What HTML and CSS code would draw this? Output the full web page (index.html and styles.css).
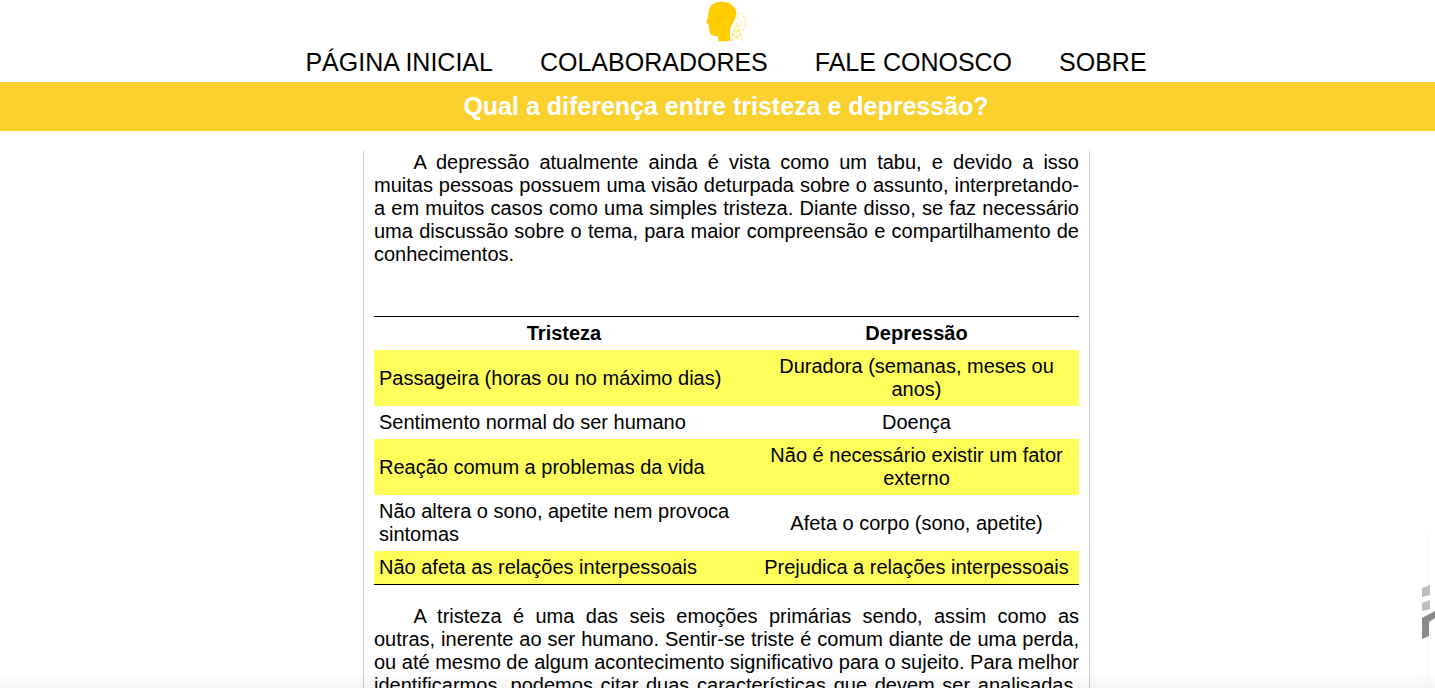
FILE: index.html
```html
<!DOCTYPE html>
<html lang="pt-BR">
<head>
    <meta charset="UTF-8">
    <meta name="viewport" content="width=device-width, initial-scale=1.0">
    <title>Qual a diferença entre tristeza e depressão?</title>
    <link rel="stylesheet" href="styles.css">
</head>
<body>

    <!-- Logo e menu -->
    <header class="top">
        <svg class="logo" viewBox="-1 0 40 44" width="40" height="44" aria-hidden="true">
            <path class="logo-head" d="M2.3 9.3C3 6.5 4.5 4.5 6.3 4C9 2.5 13 1.5 16.3 2C20 2.2 23 3 24.7 5C27.5 7 29 9 29 11.7C29.5 14 29 16 28 18.3C27.5 21 26 23 24.7 25C23.5 27 23 29 23 31.7V40.7C19 41.5 15 41.5 11.3 41.3C11.3 39 11 37.5 10.7 36C8.5 36 6.5 36 4.7 35C3 34 2.2 32 2.3 30C2.5 28 2 26 1.3 24L-1 22.7L1.3 16.7C1 14 1.5 11.5 2.3 9.3Z"/>
            <g class="logo-tower">
                <path d="M23.5 40.7L29.7 23L36 40.7M25.5 35H34M27 30H32.5M28.5 26H31M25.5 35L32.5 30M34 35L27 30M24 40.7L34 35M35.5 40.7L25.5 35"/>
                <path d="M29 13A10 10 0 0 1 33 32M29 17A6.5 6.5 0 0 1 32 28"/>
            </g>
        </svg>
        <nav class="menu">
            <a href="#">PÁGINA INICIAL</a>
            <a href="#">COLABORADORES</a>
            <a href="#">FALE CONOSCO</a>
            <a href="#">SOBRE</a>
        </nav>
    </header>

    <h1 class="title">Qual a diferença entre tristeza e depressão?</h1>

    <!-- Texto do artigo -->
    <main class="article">
        <p>A depressão atualmente ainda é vista como um tabu, e devido a isso muitas pessoas possuem uma visão deturpada sobre o assunto, interpretando-a em muitos casos como uma simples tristeza. Diante disso, se faz necessário uma discussão sobre o tema, para maior compreensão e compartilhamento de conhecimentos.</p>

        <table class="compare">
            <thead>
                <tr><th class="col-a">Tristeza</th><th>Depressão</th></tr>
            </thead>
            <tbody>
                <tr><td>Passageira (horas ou no máximo dias)</td><td>Duradora (semanas, meses ou anos)</td></tr>
                <tr><td>Sentimento normal do ser humano</td><td>Doença</td></tr>
                <tr><td>Reação comum a problemas da vida</td><td>Não é necessário existir um fator externo</td></tr>
                <tr><td>Não altera o sono, apetite nem provoca sintomas</td><td>Afeta o corpo (sono, apetite)</td></tr>
                <tr><td>Não afeta as relações interpessoais</td><td>Prejudica a relações interpessoais</td></tr>
            </tbody>
        </table>

        <p>A tristeza é uma das seis emoções primárias sendo, assim como as outras, inerente ao ser humano. Sentir-se triste é comum diante de uma perda, ou até mesmo de algum acontecimento significativo para o sujeito. Para melhor identificarmos, podemos citar duas características que devem ser analisadas, intensidade e duração do que se sente em cada caso.</p>
    </main>

    <!-- Marca flutuante no canto e sombra do rodapé -->
    <div class="side-card">
        <svg class="side-mark" viewBox="0 0 13 54" width="13" height="54" aria-hidden="true">
            <path class="mark-light" d="M0 3L8 0V10L0 12ZM0 18L8 15V24L0 26Z"/>
            <path class="mark-dark" d="M0 33L13 26V33L7 37V51L0 54Z"/>
        </svg>
    </div>
    <div class="bottom-fade"></div>

</body>
</html>
```

FILE: styles.css
```css
html, body {
    height: 100%;
    overflow: hidden;
}
body {
    margin: 0;
    background-color: white;
    color: black;
    font-family: "Liberation Sans", Arial, sans-serif;
}
.top {
    display: flex;
    flex-direction: column;
    align-items: center;
    height: 82px;
    padding-left: 17px;
}
.logo {
    display: block;
}
.logo-head {
    fill: #ffcc00;
}
.logo-tower {
    fill: none;
    stroke: #ffd84a;
    stroke-width: 0.6;
}
.menu {
    display: flex;
    gap: 47px;
    margin-top: 3px;
}
.menu a {
    color: black;
    font-size: 25px;
    line-height: 30px;
    text-decoration: none;
}
.title {
    margin: 0;
    height: 49px;
    padding-left: 17px;
    background-color: #fad12d;
    color: white;
    font-size: 25px;
    line-height: 49px;
    text-align: center;
}
.article {
    box-sizing: border-box;
    width: 727px;
    margin: 20px 0 0 363px;
    padding: 0 10px;
    border-left: 1px solid #ccc;
    border-right: 1px solid #ccc;
    font-size: 20px;
    line-height: 23px;
}
.article p {
    margin: 0;
    text-align: justify;
    text-indent: 39.5px;
}
.compare {
    width: 100%;
    margin: 50px 0 20px;
    border-collapse: collapse;
    border-top: 1px solid black;
    border-bottom: 1px solid black;
}
.compare th, .compare td {
    padding: 5px;
}
.compare .col-a {
    width: 380px;
    box-sizing: border-box;
}
.compare td:last-child {
    text-align: center;
}
.compare tbody tr:nth-child(odd) {
    background-color: #ffff5c;
}
.side-card {
    position: absolute;
    right: 0;
    top: 528px;
    bottom: 0;
    width: 4px;
    background-color: white;
    box-shadow: 0 0 12px rgba(0, 0, 0, 0.07);
}
.side-mark {
    position: absolute;
    top: 57px;
    left: -9px;
}
.mark-light {
    fill: #bdbdbd;
}
.mark-dark {
    fill: #8a8a8a;
}
.bottom-fade {
    position: absolute;
    left: 0;
    right: 0;
    bottom: 0;
    height: 18px;
    background: linear-gradient(to bottom, rgba(0, 0, 0, 0), rgba(0, 0, 0, 0.04));
    pointer-events: none;
}
```
